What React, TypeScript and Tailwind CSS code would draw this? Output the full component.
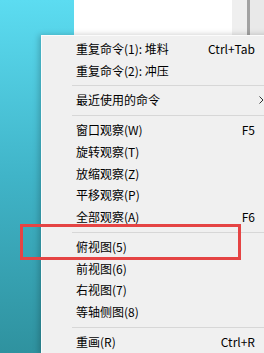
type Item =
  | { kind: "item"; label: string; shortcut?: string; submenu?: boolean }
  | { kind: "sep" };

const items: Item[] = [
  { kind: "item", label: "重复命令(1): 堆料", shortcut: "Ctrl+Tab" },
  { kind: "item", label: "重复命令(2): 冲压" },
  { kind: "sep" },
  { kind: "item", label: "最近使用的命令", submenu: true },
  { kind: "sep" },
  { kind: "item", label: "窗口观察(W)", shortcut: "F5" },
  { kind: "item", label: "旋转观察(T)" },
  { kind: "item", label: "放缩观察(Z)" },
  { kind: "item", label: "平移观察(P)" },
  { kind: "item", label: "全部观察(A)", shortcut: "F6" },
  { kind: "sep" },
  { kind: "item", label: "俯视图(5)" },
  { kind: "item", label: "前视图(6)" },
  { kind: "item", label: "右视图(7)" },
  { kind: "item", label: "等轴侧图(8)" },
  { kind: "sep" },
  { kind: "item", label: "重画(R)", shortcut: "Ctrl+R" },
];

function MenuRow({ label, shortcut, submenu }: { label: string; shortcut?: string; submenu?: boolean }) {
  return (
    <div className="flex h-[21.75px] items-center pl-[34px]">
      <div className="flex w-[179px] items-center justify-between">
        <span>{label}</span>
        {shortcut && <span>{shortcut}</span>}
      </div>
      {submenu && (
        <svg width="5" height="8" viewBox="0 0 5 8" className="ml-[4px]">
          <path d="M0.5 0.5 L4 4 L0.5 7.5" fill="none" stroke="#333" strokeWidth="1" />
        </svg>
      )}
    </div>
  );
}

export default function App() {
  return (
    <div className="relative h-[353px] w-[264px] overflow-hidden">
      {/* desktop behind the menu */}
      <div className="flex h-full w-full">
        <div className="w-[74px] bg-gradient-to-b from-[#5cdcf1] via-[#40b4c8] to-[#2f929f]" />
        <div className="w-[158px] bg-white" />
        <div className="w-[15px] bg-[#efefef]" />
        <div className="w-[3px] bg-[#a2a2a2]" />
        <div className="flex-1 bg-[#e9e9e9]" />
      </div>

      {/* context menu */}
      <div
        className="absolute left-[41px] top-[35px] w-[260px] border border-[#fbfbfb] bg-[#f0f0f0] pt-[2px] text-[12px] text-black shadow-[-2px_0_6px_rgba(0,0,0,0.22)]"
        style={{ fontFamily: '"Noto Sans CJK SC", "Noto Sans", sans-serif' }}
      >
        {items.map((it, i) =>
          it.kind === "sep" ? (
            <div key={i} className="flex h-[8px] items-center pl-[30px]">
              <div className="h-px w-full bg-[#d7d7d7]" />
            </div>
          ) : (
            <MenuRow key={i} label={it.label} shortcut={it.shortcut} submenu={it.submenu} />
          )
        )}
      </div>

      {/* red highlight box */}
      <div className="absolute left-[20px] top-[224px] h-[36px] w-[221px] border-[3px] border-[#e54444]" />
    </div>
  );
}
